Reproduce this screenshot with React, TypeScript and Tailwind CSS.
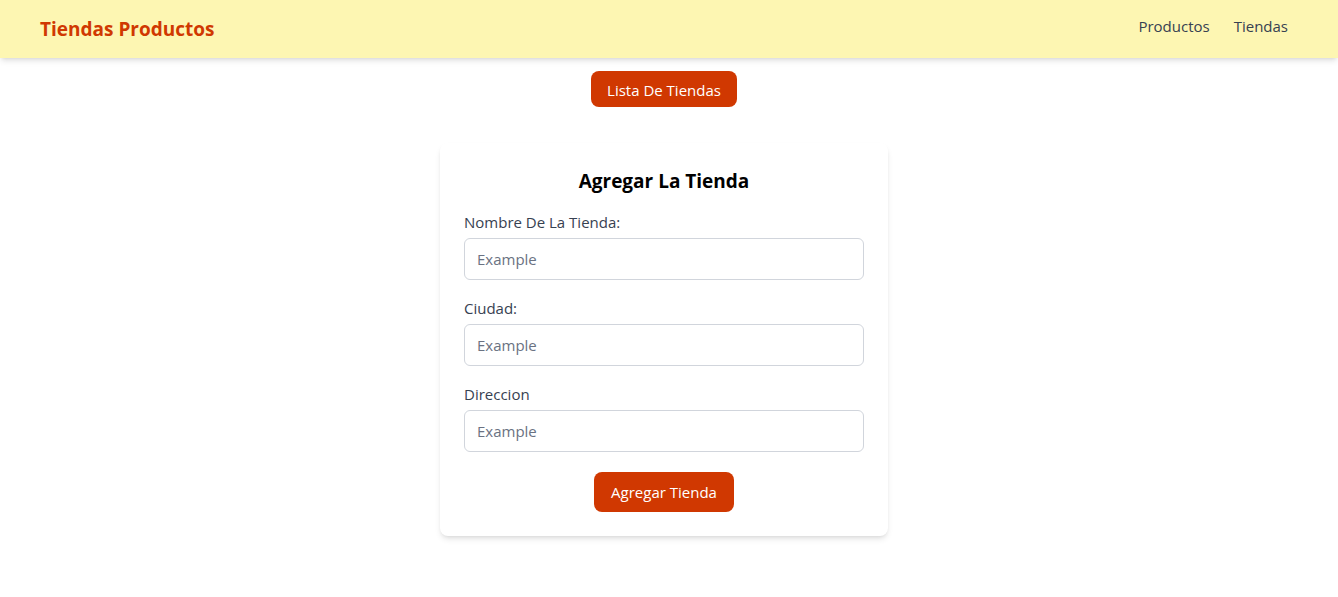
export default function App() {
  return (
    <div className="min-h-screen bg-white font-['Open_Sans',sans-serif]">
      {/* Navbar */}
      <nav className="bg-[#fdf6b2] shadow-md">
        <div className="flex items-center justify-between h-[58px] pl-10 pr-[50px]">
          <span className="text-[#d03801] font-bold text-[19px]">Tiendas Productos</span>
          <div className="flex items-center gap-6 text-[#374151] text-[15px] -mt-1.5">
            <a href="#">Productos</a>
            <a href="#">Tiendas</a>
          </div>
        </div>
      </nav>

      <div className="w-[1328px]">
        <div className="flex justify-center mt-[13px]">
          <button className="bg-[#d03801] text-white rounded-lg h-9 px-4 pt-0.5 text-[15px]">
            Lista De Tiendas
          </button>
        </div>

        {/* Card */}
        <div className="flex justify-center mt-9">
          <div className="w-[448px] bg-white rounded-lg shadow-md p-6">
            <h2 className="text-center text-[19px] leading-7 font-bold text-black mb-[15px]">Agregar La Tienda</h2>
            <form className="flex flex-col">
              <label className="text-[#374151] text-[15px] leading-6 mb-1">Nombre De La Tienda:</label>
              <input
                placeholder="Example"
                className="h-[42px] border border-gray-300 rounded-md px-3 text-[15px] placeholder:text-gray-500 mb-4"
              />
              <label className="text-[#374151] text-[15px] leading-6 mb-1">Ciudad:</label>
              <input
                placeholder="Example"
                className="h-[42px] border border-gray-300 rounded-md px-3 text-[15px] placeholder:text-gray-500 mb-4"
              />
              <label className="text-[#374151] text-[15px] leading-6 mb-1">Direccion</label>
              <input
                placeholder="Example"
                className="h-[42px] border border-gray-300 rounded-md px-3 text-[15px] placeholder:text-gray-500"
              />
              <div className="flex justify-center mt-5">
                <button type="button" className="bg-[#d03801] text-white rounded-lg h-10 px-[17px] text-[15px]">
                  Agregar Tienda
                </button>
              </div>
            </form>
          </div>
        </div>
      </div>
    </div>
  );
}
